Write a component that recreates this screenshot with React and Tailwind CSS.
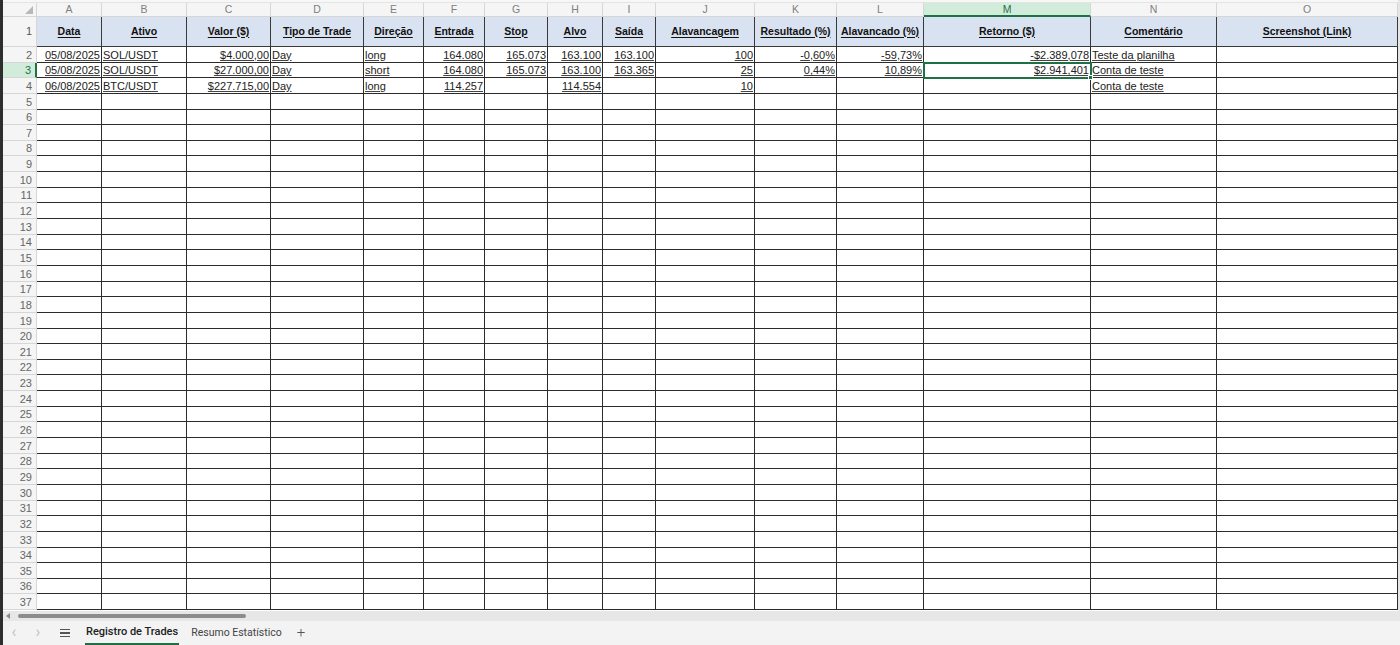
import React from "react";

const cols = [
  { w: "w-[65px]", l: "A", h: "Data", a: "r" },
  { w: "w-[85px]", l: "B", h: "Ativo", a: "l" },
  { w: "w-[84px]", l: "C", h: "Valor ($)", a: "r" },
  { w: "w-[93px]", l: "D", h: "Tipo de Trade", a: "l" },
  { w: "w-[60px]", l: "E", h: "Direção", a: "l" },
  { w: "w-[61px]", l: "F", h: "Entrada", a: "r" },
  { w: "w-[63px]", l: "G", h: "Stop", a: "r" },
  { w: "w-[55px]", l: "H", h: "Alvo", a: "r" },
  { w: "w-[53px]", l: "I", h: "Saída", a: "r" },
  { w: "w-[99px]", l: "J", h: "Alavancagem", a: "r" },
  { w: "w-[82px]", l: "K", h: "Resultado (%)", a: "r" },
  { w: "w-[87px]", l: "L", h: "Alavancado (%)", a: "r" },
  { w: "w-[167px]", l: "M", h: "Retorno ($)", a: "r" },
  { w: "w-[126px]", l: "N", h: "Comentário", a: "l" },
  { w: "w-[181px]", l: "O", h: "Screenshot (Link)", a: "l" },
];

const data = [
  ["05/08/2025", "SOL/USDT", "$4.000,00", "Day", "long", "164.080", "165.073", "163.100", "163.100", "100", "-0,60%", "-59,73%", "-$2.389,078", "Teste da planilha", ""],
  ["05/08/2025", "SOL/USDT", "$27.000,00", "Day", "short", "164.080", "165.073", "163.100", "163.365", "25", "0,44%", "10,89%", "$2.941,401", "Conta de teste", ""],
  ["06/08/2025", "BTC/USDT", "$227.715,00", "Day", "long", "114.257", "", "114.554", "", "10", "", "", "", "Conta de teste", ""],
];

const rowNums = Array.from({ length: 36 }, (_, i) => i + 2);

function ColHeader() {
  return (
    <div className="flex h-[14px] bg-[#f5f5f5]">
      <div className="w-[34px] h-full border-r border-b border-[#d6d6d6] relative bg-[#f5f5f5]">
        <div className="absolute right-[3px] bottom-[2px] w-0 h-0 border-l-[8px] border-l-transparent border-b-[8px] border-b-[#b8b8b8]" />
      </div>
      {cols.map((c) =>
        c.l === "M" ? (
          <div key={c.l} className={`${c.w} h-full flex items-center justify-center text-[10.5px] leading-none text-[#1e7145] bg-[#d2ecdc] border-r border-[#d6d6d6] border-b-2 border-b-[#1e7145]`}>
            {c.l}
          </div>
        ) : (
          <div key={c.l} className={`${c.w} h-full flex items-center justify-center text-[10.5px] leading-none text-[#808080] border-r border-b border-[#d6d6d6]`}>
            {c.l}
          </div>
        )
      )}
    </div>
  );
}

function HeaderRow() {
  return (
    <div className="flex h-[30px]">
      <div className="w-[34px] h-full flex items-center justify-end pr-[4px] text-[11px] text-[#555] bg-[#f5f5f5] border-r border-b border-[#d6d6d6]">
        1
      </div>
      {cols.map((c) => (
        <div key={c.l} className={`${c.w} h-full flex items-center justify-center bg-[#d9e2f0] border-r border-b border-[#3a3a3a] text-[10.5px] font-bold text-[#111]`}>
          <span className="underline underline-offset-2">{c.h}</span>
        </div>
      ))}
    </div>
  );
}

function DataRow({ n, vals }) {
  const selected = n === 3;
  return (
    <div className="flex h-[15.65px]">
      {selected ? (
        <div className="w-[34px] h-full flex items-end justify-end pr-[4px] text-[11px] leading-[14px] text-[#1e7145] bg-[#d2ecdc] border-b border-[#d6d6d6] border-r-2 border-r-[#1e7145]">
          {n}
        </div>
      ) : (
        <div className="w-[34px] h-full flex items-end justify-end pr-[4px] text-[11px] leading-[14px] text-[#666] bg-[#f5f5f5] border-r border-b border-[#d6d6d6]">
          {n}
        </div>
      )}
      {cols.map((c, i) => {
        const v = vals ? vals[i] : "";
        const isSel = selected && c.l === "M";
        return (
          <div
            key={c.l}
            className={`${c.w} h-full relative flex items-end ${c.a === "r" ? "justify-end" : "justify-start"} px-[1px] border-r border-b border-[#2b2b2b] text-[11px] leading-[14px] text-[#222] whitespace-nowrap ${isSel ? "outline-2 outline-[#1e7145] -outline-offset-1 z-10" : ""}`}
          >
            {v && <span className="underline underline-offset-[1px] decoration-[#444]">{v}</span>}
            {isSel && <div className="absolute right-[-3px] bottom-[-3px] w-[5px] h-[5px] bg-[#1e7145] border border-white z-20" />}
          </div>
        );
      })}
    </div>
  );
}

export default function App() {
  return (
    <div className="w-[1400px] h-[645px] flex flex-col bg-white overflow-hidden font-['Liberation_Sans',Arial,sans-serif]">
      <div className="flex h-[610.5px] shrink-0">
        <div className="w-[3px] h-full bg-[#2e2e2e] shrink-0" />
        <div className="w-[1395px] flex flex-col shrink-0">
          <div className="h-[3px] bg-[#f7f7f7] border-b border-[#e4e4e4] shrink-0" />
          <ColHeader />
          <HeaderRow />
          {rowNums.map((n) => (
            <DataRow key={n} n={n} vals={n <= 4 ? data[n - 2] : null} />
          ))}
        </div>
        <div className="w-[2px] h-full bg-[#e6e6e6] shrink-0" />
      </div>
      <div className="h-[10.5px] shrink-0 bg-[#e7e7e7] flex items-center">
        <div className="w-[3px] h-full bg-[#2e2e2e]" />
        <div className="ml-[3px] w-0 h-0 border-t-[3px] border-t-transparent border-b-[3px] border-b-transparent border-r-[4px] border-r-[#888]" />
        <div className="ml-[8px] w-[228px] h-[4px] rounded-full bg-[#8c8c8c]" />
      </div>
      <div className="flex-1 bg-[#f3f3f3] flex items-stretch font-['Roboto',sans-serif] text-[10.5px]">
        <div className="w-[3px] h-full bg-[#2e2e2e]" />
        <div className="w-[22px] flex items-center justify-center text-[#c2c2c2] text-[16px] leading-none pb-[2px]">‹</div>
        <div className="w-[26px] flex items-center justify-center text-[#c2c2c2] text-[16px] leading-none pb-[2px]">›</div>
        <div className="w-[28px] flex items-center justify-center">
          <div className="flex flex-col gap-[2.5px]">
            <div className="w-[10px] h-[1.2px] bg-[#555]" />
            <div className="w-[10px] h-[1.2px] bg-[#555]" />
            <div className="w-[10px] h-[1.2px] bg-[#555]" />
          </div>
        </div>
        <div className="ml-[6px] flex flex-col justify-end">
          <div className="flex-1 flex items-center text-[#222] text-[11px] font-medium whitespace-nowrap px-[1px]">Registro de Trades</div>
          <div className="h-[2.5px] bg-[#1e7145]" />
        </div>
        <div className="ml-[12px] flex items-center text-[#444] whitespace-nowrap">Resumo Estatístico</div>
        <div className="ml-[15px] flex items-center text-[#555] text-[15px] font-light leading-none pb-[2px]">+</div>
      </div>
    </div>
  );
}
